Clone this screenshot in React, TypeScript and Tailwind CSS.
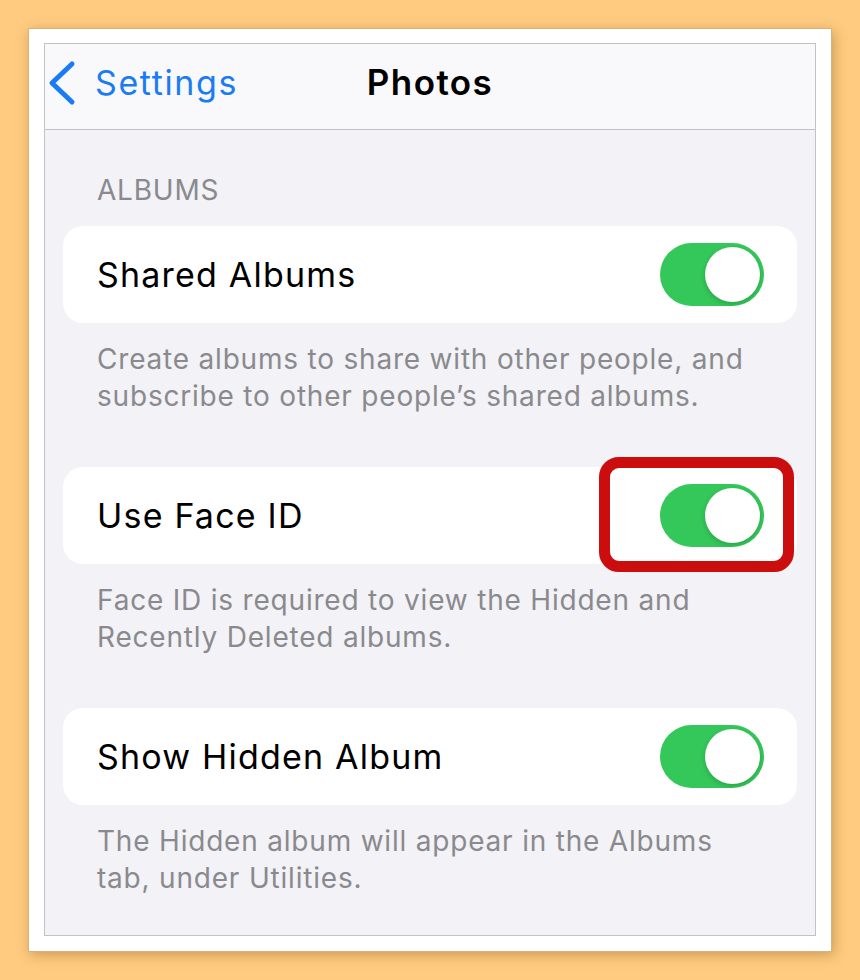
import React from 'react';

const font = { fontFamily: 'Inter, "Liberation Sans", sans-serif' };

// iOS style toggle, always on in this screen
const Toggle: React.FC = () => (
    <div className="relative h-[63px] w-[104px] shrink-0 rounded-full bg-[#34C759]">
        <div className="absolute right-[4px] top-[4px] h-[55px] w-[55px] rounded-full bg-white shadow-[0_2px_5px_rgba(0,0,0,0.18)]" />
    </div>
);

interface RowProps {
    label: string;
    footer: string[];
    highlight?: boolean;
}

const SettingRow: React.FC<RowProps> = ({ label, footer, highlight }) => (
    <div>
        <div className="relative flex h-[97px] items-center justify-between rounded-[20px] bg-white pl-[34px] pr-[33px]">
            <span className="text-[34px] tracking-[1.2px] text-black">{label}</span>
            <Toggle />
            {highlight && (
                <div className="pointer-events-none absolute left-[536px] top-[-10px] h-[115px] w-[195px] rounded-[20px] border-[11px] border-[#CC0D0D]" />
            )}
        </div>
        <div className="mt-[18px] pl-[34px] text-[28px] leading-[37px] tracking-[0.8px] text-[#8A8A8E]">
            {footer.map((line) => (
                <div key={line}>{line}</div>
            ))}
        </div>
    </div>
);

export default function App() {
    return (
        <div className="min-h-[980px] w-full bg-[#FECB80] pl-[28px] pt-[28px]" style={font}>
            <div className="h-[924px] w-[804px] border border-[#D8B27A] bg-white px-[15px] pt-[14px] shadow-[2px_3px_12px_rgba(110,70,10,0.35)]">
                <div className="h-[893px] w-[772px] border border-[#C3C3C6] bg-[#F2F2F7]">
                    {/* Nav bar */}
                    <div className="relative flex h-[86px] items-center border-b border-[#C3C3C6] bg-[#F9F9FB] pb-[8px]">
                        <div className="flex items-center pl-[1px]">
                            <svg width="32" height="48" viewBox="0 0 32 48" fill="none">
                                <path d="M26 5 L6 24 L26 43" stroke="#1A7CF5" strokeWidth="5" strokeLinecap="round" strokeLinejoin="round" />
                            </svg>
                            <span className="ml-[17px] text-[34px] tracking-[1.6px] text-[#1A7CF5]">Settings</span>
                        </div>
                        <span className="absolute left-0 right-0 text-center text-[35px] font-semibold tracking-[1.4px] text-black">Photos</span>
                    </div>

                    {/* Body */}
                    <div className="px-[18px] pt-[44px]">
                        <div className="pl-[34px] text-[28px] leading-[32px] tracking-[0.8px] text-[#8A8A8E]">ALBUMS</div>
                        <div className="mt-[20px] flex flex-col gap-[52px]">
                            <SettingRow
                                label="Shared Albums"
                                footer={['Create albums to share with other people, and', 'subscribe to other people’s shared albums.']}
                            />
                            <SettingRow
                                label="Use Face ID"
                                footer={['Face ID is required to view the Hidden and', 'Recently Deleted albums.']}
                                highlight
                            />
                            <SettingRow
                                label="Show Hidden Album"
                                footer={['The Hidden album will appear in the Albums', 'tab, under Utilities.']}
                            />
                        </div>
                    </div>
                </div>
            </div>
        </div>
    );
}
